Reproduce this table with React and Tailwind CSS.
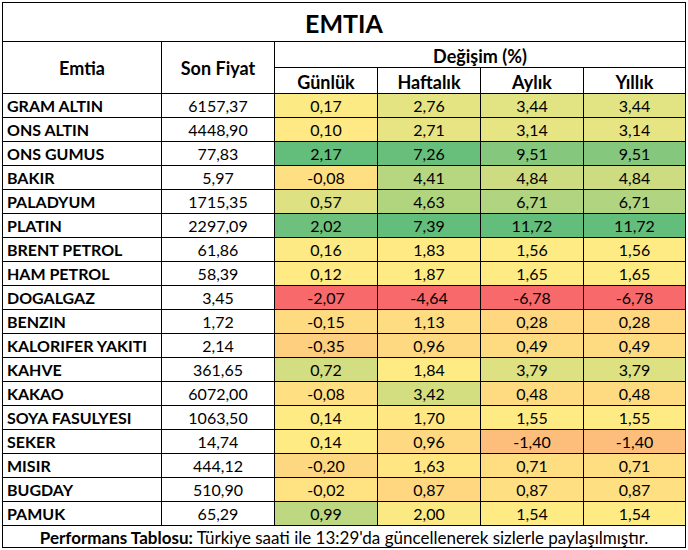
import React from "react";

const rows = [
  ["GRAM ALTIN", "6157,37", 0.17, 2.76, 3.44, 3.44],
  ["ONS ALTIN", "4448,90", 0.1, 2.71, 3.14, 3.14],
  ["ONS GUMUS", "77,83", 2.17, 7.26, 9.51, 9.51],
  ["BAKIR", "5,97", -0.08, 4.41, 4.84, 4.84],
  ["PALADYUM", "1715,35", 0.57, 4.63, 6.71, 6.71],
  ["PLATIN", "2297,09", 2.02, 7.39, 11.72, 11.72],
  ["BRENT PETROL", "61,86", 0.16, 1.83, 1.56, 1.56],
  ["HAM PETROL", "58,39", 0.12, 1.87, 1.65, 1.65],
  ["DOGALGAZ", "3,45", -2.07, -4.64, -6.78, -6.78],
  ["BENZIN", "1,72", -0.15, 1.13, 0.28, 0.28],
  ["KALORIFER YAKITI", "2,14", -0.35, 0.96, 0.49, 0.49],
  ["KAHVE", "361,65", 0.72, 1.84, 3.79, 3.79],
  ["KAKAO", "6072,00", -0.08, 3.42, 0.48, 0.48],
  ["SOYA FASULYESI", "1063,50", 0.14, 1.7, 1.55, 1.55],
  ["SEKER", "14,74", 0.14, 0.96, -1.4, -1.4],
  ["MISIR", "444,12", -0.2, 1.63, 0.71, 0.71],
  ["BUGDAY", "510,90", -0.02, 0.87, 0.87, 0.87],
  ["PAMUK", "65,29", 0.99, 2.0, 1.54, 1.54],
];

const RED = [248, 105, 107];
const YEL = [255, 235, 132];
const GRN = [99, 190, 123];

function scaleFor(values) {
  const s = [...values].sort((a, b) => a - b);
  const n = s.length;
  const r = 0.5 * (n - 1);
  const lo = Math.floor(r);
  const mid = s[lo] + (s[Math.min(lo + 1, n - 1)] - s[lo]) * (r - lo);
  const min = s[0];
  const max = s[n - 1];
  return (v) => {
    let a, b, t;
    if (v <= mid) {
      a = RED;
      b = YEL;
      t = mid === min ? 1 : (v - min) / (mid - min);
    } else {
      a = YEL;
      b = GRN;
      t = max === mid ? 0 : (v - mid) / (max - mid);
    }
    const c = a.map((x, i) => Math.round(x + (b[i] - x) * t));
    return `rgb(${c[0]},${c[1]},${c[2]})`;
  };
}

const scales = [2, 3, 4, 5].map((i) => scaleFor(rows.map((r) => r[i])));
const fmt = (v) => v.toFixed(2).replace(".", ",");

export default function App() {
  return (
    <div className="w-[688px] h-[550px] bg-white pt-[2px] pl-[2px]" style={{ fontFamily: "Lato, 'Liberation Sans', sans-serif" }}>
      <div className="w-[684px] border border-black bg-black grid gap-px grid-cols-[158px_112px_102px_102px_102px_101px] grid-rows-[38px_25px_25px_repeat(18,23px)_21px] text-black leading-none">
        <div className="col-span-6 bg-white flex items-center justify-center text-[25px] font-bold pt-[2px]">EMTIA</div>
        <div className="row-span-2 bg-white flex items-center justify-center text-[18px] font-bold">Emtia</div>
        <div className="row-span-2 bg-white flex items-center justify-center text-[18px] font-bold">Son Fiyat</div>
        <div className="col-span-4 bg-white flex items-center justify-center text-[18px] font-bold pt-[2px]">Değişim (%)</div>
        <div className="bg-white flex items-center justify-center text-[18px] font-bold pt-[2px]">Günlük</div>
        <div className="bg-white flex items-center justify-center text-[18px] font-bold pt-[2px]">Haftalık</div>
        <div className="bg-white flex items-center justify-center text-[18px] font-bold pt-[2px]">Aylık</div>
        <div className="bg-white flex items-center justify-center text-[18px] font-bold pt-[2px]">Yıllık</div>
        {rows.map((r) => (
          <React.Fragment key={r[0]}>
            <div className="bg-white flex items-center pl-[4px] pt-[1px] text-[16px] font-bold">{r[0]}</div>
            <div className="bg-white flex items-center justify-center pt-[1px] text-[16px]">{r[1]}</div>
            {[2, 3, 4, 5].map((i) => (
              <div
                key={i}
                className="flex items-center justify-center pt-[1px] text-[16px]"
                style={{ backgroundColor: scales[i - 2](r[i]) }}
              >
                {fmt(r[i])}
              </div>
            ))}
          </React.Fragment>
        ))}
        <div className="col-span-6 bg-white flex items-center justify-center pt-[1px] text-[17px] whitespace-nowrap">
          <span className="font-bold">Performans Tablosu:</span>
          <span>&nbsp;Türkiye saati ile 13:29'da güncellenerek sizlerle paylaşılmıştır.</span>
        </div>
      </div>
    </div>
  );
}
